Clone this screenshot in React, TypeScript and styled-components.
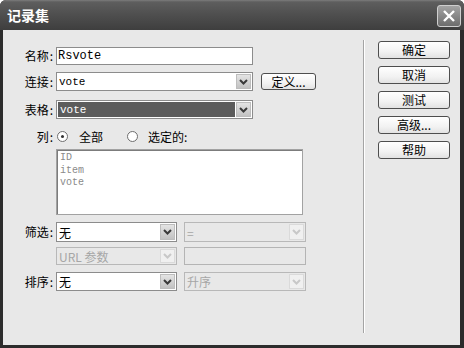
import React from 'react';
import styled, { createGlobalStyle } from 'styled-components';

const GlobalStyle = createGlobalStyle`
  html, body {
    margin: 0;
    padding: 0;
    background: #ffffff;
  }
  body {
    font-family: 'Noto Sans CJK SC', 'Noto Sans', sans-serif;
    font-size: 12px;
    color: #000;
  }
`;

const Window = styled.div`
  width: 464px;
  height: 348px;
  display: flex;
  flex-direction: column;
  background: #2c2c2c;
  border-radius: 6px 6px 0 0;
  overflow: hidden;
`;

const TitleBar = styled.div`
  height: 30px;
  flex: none;
  display: flex;
  align-items: flex-start;
  justify-content: space-between;
  padding: 0 3px 0 7px;
  background: linear-gradient(#7c7c7c 0, #5e5e5e 2px, #505050 45%, #3e3e3e 100%);
`;

const Title = styled.span`
  margin-top: 6px;
  color: #fff;
  font-size: 14px;
  font-weight: bold;
  line-height: 18px;
`;

const CloseButton = styled.div`
  width: 24px;
  height: 22px;
  margin-top: 5px;
  box-sizing: border-box;
  border: 1px solid #cfcfcf;
  border-radius: 3px;
  background: linear-gradient(#a4a4a4, #6c6c6c);
  display: flex;
  align-items: center;
  justify-content: center;
`;

const Body = styled.div`
  flex: 1;
  margin: 0 4px 3px 3px;
  background: #e8e8e8;
  display: flex;
`;

const Form = styled.div`
  width: 360px;
  flex: none;
  padding-top: 17px;
  display: flex;
  flex-direction: column;
`;

const Row = styled.div<{ $gap: number }>`
  display: flex;
  align-items: center;
  margin-top: ${(p) => p.$gap}px;
`;

const Label = styled.div`
  width: 53px;
  flex: none;
  box-sizing: border-box;
  padding-right: 3px;
  text-align: right;
  font-size: 12px;
  line-height: 16px;
  white-space: nowrap;
`;

const Colon = styled.span`
  margin-left: 1px;
`;

const TextInput = styled.div<{ $width: number; $disabled?: boolean }>`
  width: ${(p) => p.$width}px;
  height: 18px;
  box-sizing: border-box;
  border: 1px solid ${(p) => (p.$disabled ? '#b4b4b4' : '#8c8c8c')};
  background: ${(p) => (p.$disabled ? '#e8e8e8' : '#fff')};
  padding-left: 1px;
  font-family: 'Liberation Mono', monospace;
  font-size: 12px;
  line-height: 16px;
`;

const SelectBox = styled.div<{ $width: number; $height: number; $disabled?: boolean }>`
  width: ${(p) => p.$width}px;
  height: ${(p) => p.$height}px;
  box-sizing: border-box;
  border: 1px solid ${(p) => (p.$disabled ? '#b8b8b8' : '#8c8c8c')};
  background: ${(p) => (p.$disabled ? '#e8e8e8' : '#fff')};
  display: flex;
  align-items: stretch;
  padding: 1px;
  gap: 1px;
`;

const SelectText = styled.div<{ $selected?: boolean; $disabled?: boolean; $mono?: boolean }>`
  flex: 1;
  display: flex;
  align-items: center;
  padding-left: 2px;
  margin-left: ${(p) => (p.$selected ? 0 : -1)}px;
  background: ${(p) => (p.$selected ? '#5c5c5c' : 'transparent')};
  color: ${(p) => (p.$selected ? '#fff' : p.$disabled ? '#a6a6a6' : '#000')};
  font-family: ${(p) =>
    p.$mono ? "'Liberation Mono', monospace" : "'Noto Sans CJK SC', sans-serif"};
  font-size: ${(p) => (p.$mono ? 11 : 12)}px;
  white-space: nowrap;
  overflow: hidden;
`;

const ArrowBox = styled.div<{ $disabled?: boolean }>`
  width: 15px;
  flex: none;
  box-sizing: border-box;
  display: flex;
  align-items: center;
  justify-content: center;
  border: 1px solid ${(p) => (p.$disabled ? '#dadada' : '#bdbdbd')};
  background: ${(p) =>
    p.$disabled ? '#f0f0f0' : 'linear-gradient(#e4e4e4, #c2c2c2)'};
`;

const SmallButton = styled.div<{ $width: number }>`
  width: ${(p) => p.$width}px;
  height: 18px;
  box-sizing: border-box;
  border: 1px solid #4e4e4e;
  border-radius: 3px;
  background: linear-gradient(#ffffff, #f2f2f2 60%, #e2e2e2);
  display: flex;
  align-items: center;
  justify-content: center;
  font-size: 12px;
  line-height: 16px;
`;

const DefineButton = styled(SmallButton)`
  margin-left: 8px;
  height: 17px;
`;

const RadioGroup = styled.div`
  display: flex;
  align-items: center;
  margin-left: 1px;
`;

const Radio = styled.div<{ $checked?: boolean }>`
  width: 11px;
  height: 11px;
  box-sizing: border-box;
  border: 1px solid #6e6e6e;
  border-radius: 50%;
  background: #fff;
  display: flex;
  align-items: center;
  justify-content: center;

  &::after {
    content: '';
    width: 3px;
    height: 3px;
    border-radius: 50%;
    background: ${(p) => (p.$checked ? '#333' : 'transparent')};
  }
`;

const RadioText = styled.span<{ $gapLeft: number; $gapRight: number }>`
  margin-left: ${(p) => p.$gapLeft}px;
  margin-right: ${(p) => p.$gapRight}px;
  font-size: 12px;
`;

const ListBox = styled.div`
  margin: 4px 0 0 53px;
  width: 247px;
  height: 66px;
  box-sizing: border-box;
  border: 1px solid #a2a2a2;
  box-shadow: inset 1px 1px 0 #7c7c7c;
  background: #fff;
  padding: 2px 3px;
`;

const ListItem = styled.div`
  font-family: 'Liberation Mono', monospace;
  font-size: 10px;
  line-height: 12.5px;
  color: #8a8a8a;
`;

const Spacer = styled.div`
  width: 53px;
  flex: none;
`;

const PairGap = styled.div`
  width: 7px;
  flex: none;
`;

const Separator = styled.div`
  width: 0;
  margin: 10px 0 12px;
  border-left: 1px solid #a4a4a4;
  border-right: 1px solid #ffffff;
`;

const ButtonColumn = styled.div`
  display: flex;
  flex-direction: column;
  gap: 7px;
  padding: 11px 0 0 13px;
`;

const Chevron = ({ disabled }: { disabled?: boolean }) => (
  <svg width="9" height="6" viewBox="0 0 9 6">
    <polyline
      points="1,1 4.5,4.5 8,1"
      fill="none"
      stroke={disabled ? '#c8c8c8' : '#3a3a3a'}
      strokeWidth="2"
    />
  </svg>
);

type SelectProps = {
  width: number;
  height?: number;
  value: string;
  disabled?: boolean;
  selected?: boolean;
  mono?: boolean;
};

const Select = ({ width, height = 19, value, disabled, selected, mono }: SelectProps) => (
  <SelectBox $width={width} $height={height} $disabled={disabled}>
    <SelectText $selected={selected} $disabled={disabled} $mono={mono}>
      {value}
    </SelectText>
    <ArrowBox $disabled={disabled}>
      <Chevron disabled={disabled} />
    </ArrowBox>
  </SelectBox>
);

const FieldLabel = ({ text }: { text: string }) => (
  <Label>
    {text}
    <Colon>:</Colon>
  </Label>
);

const sideButtons = ['确定', '取消', '测试', '高级...', '帮助'];

const App = () => {
  return (
    <>
      <GlobalStyle />
      <Window>
        <TitleBar>
          <Title>记录集</Title>
          <CloseButton>
            <svg width="14" height="14" viewBox="0 0 14 14">
              <path d="M2 2 L12 12 M12 2 L2 12" stroke="#fff" strokeWidth="2.4" />
            </svg>
          </CloseButton>
        </TitleBar>
        <Body>
          <Form>
            <Row $gap={0}>
              <FieldLabel text="名称" />
              <TextInput $width={197}>Rsvote</TextInput>
            </Row>
            <Row $gap={7}>
              <FieldLabel text="连接" />
              <Select width={197} value="vote" mono />
              <DefineButton $width={55}>定义...</DefineButton>
            </Row>
            <Row $gap={9}>
              <FieldLabel text="表格" />
              <Select width={197} value="vote" mono selected />
            </Row>
            <Row $gap={9}>
              <FieldLabel text="列" />
              <RadioGroup>
                <Radio $checked />
                <RadioText $gapLeft={11} $gapRight={24}>全部</RadioText>
                <Radio />
                <RadioText $gapLeft={10} $gapRight={0}>选定的:</RadioText>
              </RadioGroup>
            </Row>
            <ListBox>
              <ListItem>ID</ListItem>
              <ListItem>item</ListItem>
              <ListItem>vote</ListItem>
            </ListBox>
            <Row $gap={7}>
              <FieldLabel text="筛选" />
              <Select width={121} height={20} value="无" />
              <PairGap />
              <Select width={122} height={20} value="=" disabled />
            </Row>
            <Row $gap={5}>
              <Spacer />
              <Select width={121} height={18} value="URL 参数" disabled />
              <PairGap />
              <TextInput $width={122} $disabled />
            </Row>
            <Row $gap={7}>
              <FieldLabel text="排序" />
              <Select width={121} height={19} value="无" />
              <PairGap />
              <Select width={122} height={19} value="升序" disabled />
            </Row>
          </Form>
          <Separator />
          <ButtonColumn>
            {sideButtons.map((label) => (
              <SmallButton key={label} $width={72}>
                {label}
              </SmallButton>
            ))}
          </ButtonColumn>
        </Body>
      </Window>
    </>
  );
};

export default App;
